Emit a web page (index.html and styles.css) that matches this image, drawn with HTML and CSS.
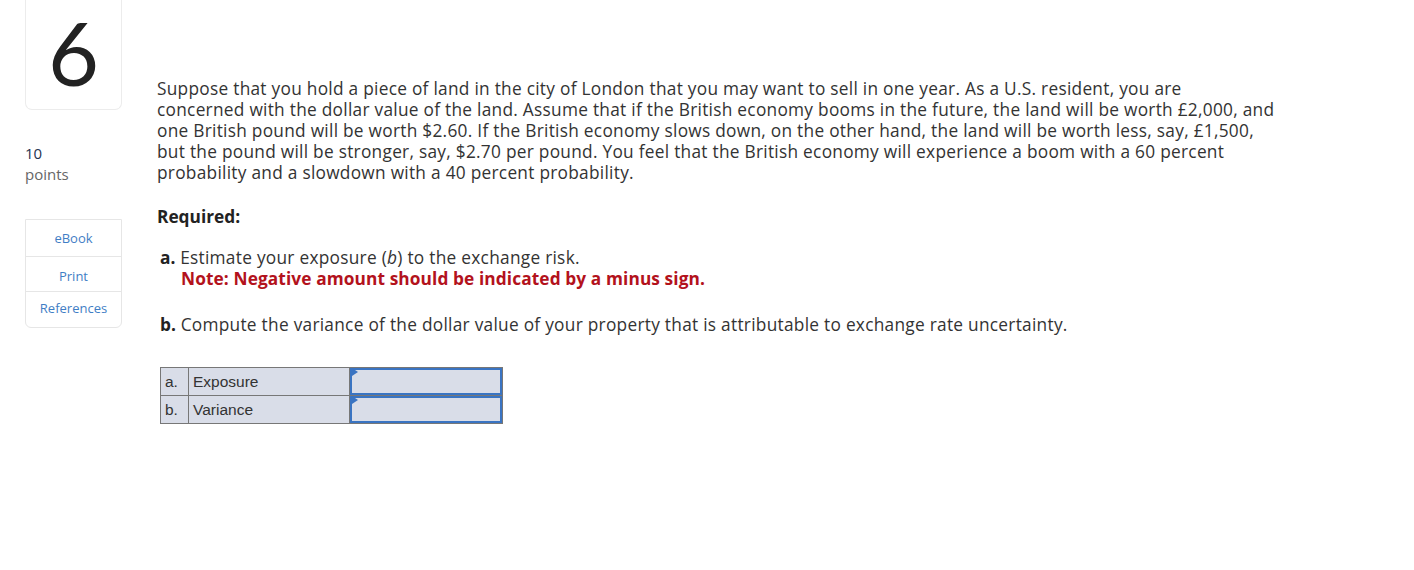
FILE: index.html
```html
<!DOCTYPE html>
<html>
<head>
<meta charset="utf-8">
<link rel="stylesheet" href="styles.css">
</head>
<body>
<div class="page">
  <aside class="side">
    <div class="qnum"><span class="qnum-text">6</span></div>
    <div class="points">
      <div class="pts-num">10</div>
      <div class="pts-label">points</div>
    </div>
    <nav class="links">
      <a class="link link-ebook">eBook</a>
      <a class="link link-print">Print</a>
      <a class="link link-refs">References</a>
    </nav>
  </aside>
  <main class="content">
    <p class="intro">Suppose that you hold a piece of land in the city of London that you may want to sell in one year. As a U.S. resident, you are<br>concerned with the dollar value of the land. Assume that if the British economy booms in the future, the land will be worth £2,000, and<br>one British pound will be worth $2.60. If the British economy slows down, on the other hand, the land will be worth less, say, £1,500,<br>but the pound will be stronger, say, $2.70 per pound. You feel that the British economy will experience a boom with a 60 percent<br>probability and a slowdown with a 40 percent probability.</p>
    <h3 class="required">Required:</h3>
    <div class="part part-a">
      <div><b>a.</b> Estimate your exposure (<i>b</i>) to the exchange risk.</div>
      <div class="note">Note: Negative amount should be indicated by a minus sign.</div>
    </div>
    <div class="part part-b"><b>b.</b> Compute the variance of the dollar value of your property that is attributable to exchange rate uncertainty.</div>
    <table class="answers">
      <tr>
        <td class="c-letter">a.</td>
        <td class="c-label">Exposure</td>
        <td class="c-input"><span class="field"><span class="flag"></span></span></td>
      </tr>
      <tr>
        <td class="c-letter">b.</td>
        <td class="c-label">Variance</td>
        <td class="c-input"><span class="field"><span class="flag"></span></span></td>
      </tr>
    </table>
  </main>
</div>
</body>
</html>
```

FILE: styles.css
```css
html, body {
  margin: 0;
  padding: 0;
  background: #fff;
}
body {
  font-family: "Open Sans", "Liberation Sans", sans-serif;
  color: #333;
}
.page {
  display: flex;
  align-items: flex-start;
}
.side {
  width: 97px;
  margin-left: 25px;
  display: flex;
  flex-direction: column;
}
.qnum {
  height: 110px;
  border: 1px solid #ececec;
  border-top: none;
  border-radius: 0 0 7px 7px;
  box-sizing: border-box;
  display: flex;
  align-items: center;
  justify-content: center;
  padding-bottom: 6px;
}
.qnum-text {
  font-family: Lato, "Open Sans", sans-serif;
  font-size: 88px;
  line-height: 1;
  color: #222;
  font-weight: 400;
}
.points {
  margin-top: 33px;
  line-height: 21px;
}
.pts-num {
  font-size: 15px;
  color: #1f3350;
}
.pts-label {
  font-size: 15px;
  color: #666;
}
.links {
  margin-top: 34px;
  border: 1px solid #e6e6e6;
  border-radius: 0 0 6px 6px;
  display: flex;
  flex-direction: column;
}
.link {
  display: block;
  text-align: center;
  font-size: 13px;
  color: #3f7ec5;
}
.link-ebook {
  height: 36px;
  line-height: 36px;
}
.link-print {
  height: 34px;
  line-height: 38px;
}
.link-refs {
  height: 35px;
  line-height: 33px;
}
.link + .link {
  border-top: 1px solid #e6e6e6;
}
.content {
  margin-left: 35px;
  width: 1180px;
  font-size: 17.3px;
  letter-spacing: 0.27px;
}
.intro {
  margin: 78px 0 0 0;
  line-height: 21px;
  white-space: nowrap;
}
.required {
  font-size: 17.3px;
  font-weight: 700;
  margin: 23px 0 0 0;
  line-height: 22px;
  color: #222;
  letter-spacing: 0;
}
.part {
  margin-left: 3px;
  line-height: 21px;
}
.part-a {
  margin-top: 19px;
}
.part b {
  color: #222;
  letter-spacing: 0;
}
.note {
  margin-left: 21px;
  color: #b3121c;
  font-weight: 700;
  letter-spacing: 0.1px;
}
.part-b {
  margin-top: 25px;
}
.answers {
  margin-top: 32px;
  margin-left: 3px;
  border-collapse: collapse;
  font-family: "Liberation Sans", Arial, sans-serif;
  font-size: 15.5px;
  letter-spacing: 0;
  color: #333;
}
.answers td {
  border: 1px solid #777;
  background: #d9dde8;
  height: 27px;
  padding: 0;
}
.c-letter {
  width: 28px;
  padding-left: 4px !important;
  box-sizing: border-box;
}
.c-label {
  width: 161px;
  padding-left: 4px !important;
  box-sizing: border-box;
}
.c-input {
  width: 152px;
}
.field {
  display: block;
  height: 27px;
  border: 2px solid #3a74c2;
  box-sizing: border-box;
  position: relative;
}
.flag {
  position: absolute;
  left: 0;
  top: -2px;
  width: 0;
  height: 0;
  border-top: 4px solid transparent;
  border-bottom: 4px solid transparent;
  border-left: 6px solid #3a74c2;
}
```
